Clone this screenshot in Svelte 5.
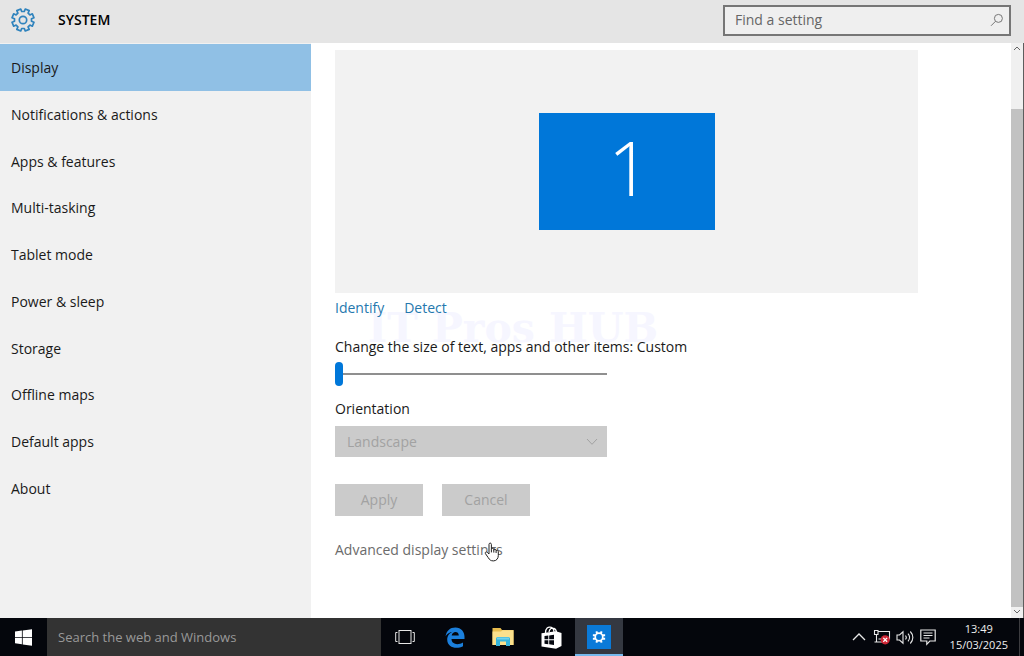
<script>
  const navItems = [
    "Display",
    "Notifications & actions",
    "Apps & features",
    "Multi-tasking",
    "Tablet mode",
    "Power & sleep",
    "Storage",
    "Offline maps",
    "Default apps",
    "About",
  ];

  let active = $state("Display");
  let query = $state("");
  let webQuery = $state("");
  let scale = $state(0);

  // eight flat teeth around the centre of a 24x24 box
  function gearPath(outer, inner) {
    const parts = [];
    for (let i = 0; i < 8; i++) {
      const base = (i * Math.PI) / 4 - Math.PI / 2 + Math.PI / 8;
      [
        [-0.24, inner],
        [-0.19, outer],
        [0.19, outer],
        [0.24, inner],
      ].forEach(([a, r]) => {
        const x = (12 + r * Math.cos(base + a)).toFixed(2);
        const y = (12 + r * Math.sin(base + a)).toFixed(2);
        parts.push(`${x} ${y}`);
      });
    }
    return "M" + parts.join("L") + "Z";
  }

  const gear = gearPath(11.2, 8.6);
</script>

<div class="desktop">
  <header class="title-bar">
    <svg class="gear" viewBox="0 0 24 24" aria-hidden="true">
      <path d={gear} />
      <circle cx="12" cy="12" r="3.7" />
    </svg>
    <h1>SYSTEM</h1>
    <div class="find">
      <input type="text" aria-label="Find a setting" placeholder="Find a setting" bind:value={query} />
      <svg viewBox="0 0 14 14" aria-hidden="true">
        <circle cx="8.4" cy="5.4" r="4" />
        <path d="M5.5 8.3L1 12.8" />
      </svg>
    </div>
  </header>

  <div class="window">
    <nav>
      <ul>
        {#each navItems as item}
          <li>
            <button class:active={item === active} onclick={() => (active = item)}>{item}</button>
          </li>
        {/each}
      </ul>
    </nav>

    <main>
      <div class="preview">
        <button class="monitor">1</button>
      </div>

      <div class="links">
        <a href="#identify">Identify</a>
        <a href="#detect">Detect</a>
        <span class="watermark">IT Pros HUB</span>
      </div>

      <label class="scale-label" for="scale">Change the size of text, apps and other items: Custom</label>
      <input id="scale" type="range" min="0" max="4" bind:value={scale} />

      <label class="orientation-label" for="orientation">Orientation</label>
      <div class="select">
        <select id="orientation" disabled>
          <option>Landscape</option>
        </select>
        <svg viewBox="0 0 12 8" aria-hidden="true"><path d="M1 1L6 6.3L11 1" /></svg>
      </div>

      <div class="actions">
        <button disabled>Apply</button>
        <button disabled>Cancel</button>
      </div>

      <div class="advanced">
        <a href="#advanced">Advanced display settings</a>
        <svg class="pointer" viewBox="0 0 16 20" aria-hidden="true">
          <path
            d="M5 12V2.4C5 .6 7.4 .6 7.4 2.4V7.4C7.5 6 9.7 6 9.8 7.6V8.2C10 6.9 12 7 12.1 8.4V9C12.4 7.9 14.3 8.1 14.3 9.6V13.5C14.3 16.5 12.5 18.9 9.4 18.9C6.6 18.9 5.5 17.7 4.2 15.6L1.4 11.6C.7 10.3 2.3 9.4 3.3 10.4Z"
          />
          <path d="M7.4 7.4V10.4M9.8 8V10.6M12.1 8.8V11" />
        </svg>
      </div>
    </main>

    <div class="scrollbar" aria-hidden="true">
      <svg viewBox="0 0 10 6"><path d="M2 5L5 2L8 5" /></svg>
      <div class="thumb"></div>
      <svg viewBox="0 0 10 6"><path d="M2 1L5 4L8 1" /></svg>
    </div>
  </div>

  <footer class="taskbar">
    <button class="start" aria-label="Start">
      <svg width="17" height="17" viewBox="0 0 17 17">
        <path fill="#fff" d="M0 2.6L6.9 1.6V8H0ZM7.7 1.5L17 .2V8H7.7ZM0 8.8H6.9V15.3L0 14.3ZM7.7 8.8H17V16.7L7.7 15.4Z" />
      </svg>
    </button>
    <input
      class="web-search"
      type="text"
      aria-label="Search the web and Windows"
      placeholder="Search the web and Windows"
      bind:value={webQuery}
    />

    <button class="app task-view" aria-label="Task view">
      <svg width="20" height="16" viewBox="0 0 20 16" fill="none" stroke="#e6e6e6">
        <rect x="4" y="1.5" width="12" height="13" />
        <path d="M2.5 3.5H.7V12.5H2.5M17.5 3.5H19.3V12.5H17.5" />
      </svg>
    </button>
    <button class="app" aria-label="Edge">
      <svg width="20" height="21" viewBox="0 0 20 21">
        <path
          fill="#1b7fdc"
          d="M.6 9.3C1.2 3.8 5 .4 10.4 .4C16.2 .4 19.5 4.7 19.5 9.8V12.1H6.5C6.7 17.8 13.4 18.3 18 15.4V19.2C11.6 22.6 2.2 20.7 2.2 12.5C2.2 8.9 4.4 6 7.8 4.7C4.7 5 2.1 6.7 .6 9.3ZM6.7 8.5H13.8C13.8 3.7 7.2 4 6.7 8.5Z"
        />
      </svg>
    </button>
    <button class="app" aria-label="File Explorer">
      <svg width="22" height="20" viewBox="0 0 22 20">
        <path fill="#e9bd4e" d="M.5 1H8.5L10 3H21.5V18H.5Z" />
        <path fill="#fbe08c" d="M.5 4.5H9L10.5 3.3H21.5V18H.5Z" />
        <path fill="#35b4dc" d="M4 19V12C4 10.6 4.9 10 6 10H16C17.2 10 18 10.6 18 12V19H14V14.5H8V19Z" />
        <path fill="#73d2ea" d="M5 10.5H17V12.5H5Z" />
      </svg>
    </button>
    <button class="app" aria-label="Store">
      <svg width="21" height="23" viewBox="0 0 21 23">
        <path fill="none" stroke="#fff" stroke-width="1.3" d="M4.5 7C4.5 2 7.3 .7 9.5 1.2C12 1.7 12.8 3.5 13 6M8 6C8.5 2.5 11 1.5 13 2.4C15 3.3 15.5 4.5 15.5 7" />
        <path fill="#fff" d="M.5 7.2L15 5.2L20.5 7V20L15 22.8L.5 20.4Z" />
        <path fill="#050810" d="M3.5 10L7.3 9.5V13.3H3.5ZM8.2 9.4L13 8.8V13.3H8.2ZM3.5 14.2H7.3V18.2L3.5 17.7ZM8.2 14.2H13V19L8.2 18.3Z" />
      </svg>
    </button>
    <button class="app running" aria-label="Settings">
      <span class="tile">
        <svg width="14" height="14" viewBox="0 0 24 24" fill="none" stroke="#fff">
          <circle cx="12" cy="12" r="6.5" stroke-width="3" />
          <path stroke-width="3.4" d="M9 6.5L7.5 2.5M15 6.5L16.5 2.5M9 17.5L7.5 21.5M15 17.5L16.5 21.5M6.5 9L1.5 9M17.5 9H22.5M6.5 15H1.5M17.5 15H22.5" />
        </svg>
      </span>
    </button>

    <div class="tray">
      <button aria-label="Show hidden icons">
        <svg width="14" height="8" viewBox="0 0 14 8" fill="none" stroke="#e8e8e8" stroke-width="1.3"><path d="M1 7L7 1L13 7" /></svg>
      </button>
      <button aria-label="Network">
        <svg width="18" height="16" viewBox="0 0 18 16" fill="none" stroke="#e8e8e8" stroke-width="1.1">
          <path d="M5.5 2.5H16.5V10H5.5M3.5 5.5V13M1.5 13H8M6.5 13H10M1.5 1.5H5V5.5H1.5Z" />
          <circle cx="12.2" cy="10.8" r="4.6" fill="#cf2635" stroke="none" />
          <path stroke="#fff" stroke-width="1.3" d="M10.3 8.9L14.1 12.7M14.1 8.9L10.3 12.7" />
        </svg>
      </button>
      <button aria-label="Volume">
        <svg width="18" height="15" viewBox="0 0 18 15" fill="none" stroke="#e8e8e8" stroke-width="1.1">
          <path d="M1 5H3.5L7 1.8V13.2L3.5 10H1ZM9.5 5.5C10.5 6.7 10.5 8.3 9.5 9.5M12 3.7C14 6 14 9 12 11.3M14.3 1.5C17.7 5 17.7 10 14.3 13.5" />
        </svg>
      </button>
      <button aria-label="Action centre">
        <svg width="16" height="17" viewBox="0 0 16 17" fill="none" stroke="#e8e8e8" stroke-width="1.2">
          <path d="M.8 1H15.2V12H9.8L6.8 15.3V12H.8ZM3.5 4H12.5M3.5 6.5H12.5M3.5 9H9.5" />
        </svg>
      </button>
      <div class="clock">
        <span>13:49</span>
        <span>15/03/2025</span>
      </div>
    </div>
  </footer>
</div>

<style>
  :global(body) {
    margin: 0;
    background: #fff;
  }

  .desktop {
    display: flex;
    flex-direction: column;
    min-height: 100vh;
    font-family: "Open Sans", "Noto Sans", sans-serif;
    font-size: 14px;
    line-height: 20px;
    color: #1a1a1a;
  }

  button,
  input,
  select {
    font: inherit;
    color: inherit;
    margin: 0;
    border: 0;
    border-radius: 0;
    box-sizing: border-box;
  }

  button {
    padding: 0;
    background: none;
  }

  a {
    text-decoration: none;
  }

  /* title bar */
  .title-bar {
    display: flex;
    align-items: center;
    box-sizing: border-box;
    height: 43px;
    padding: 0 13px 3px 11px;
    background: #e5e5e5;
  }

  .gear {
    width: 24px;
    height: 24px;
    fill: none;
    stroke: #2f83bd;
    stroke-width: 1.7;
    stroke-linejoin: round;
  }

  h1 {
    margin: 0 0 0 23px;
    font-size: 14px;
    font-weight: 600;
    color: #000;
  }

  .find {
    display: flex;
    align-items: center;
    box-sizing: border-box;
    width: 288px;
    height: 31px;
    margin-left: auto;
    padding-right: 5px;
    border: 2px solid #767676;
    background: #efefef;
  }

  .find input {
    flex: 1;
    min-width: 0;
    padding: 0 10px;
    background: none;
  }

  .find input::placeholder {
    color: #666;
    opacity: 1;
  }

  .find svg {
    width: 14px;
    height: 14px;
    fill: none;
    stroke: #777;
    stroke-width: 1;
  }

  /* settings window */
  .window {
    display: flex;
    flex: 1;
    border-right: 1px solid #5d5d5d;
  }

  nav {
    flex: none;
    width: 311px;
    padding-top: 1px;
    background: #f1f1f1;
  }

  nav ul {
    display: grid;
    grid-auto-rows: 1fr;
    min-height: 467px;
    margin: 0;
    padding: 0;
    list-style: none;
  }

  nav button {
    width: 100%;
    height: 100%;
    padding: 2px 11px 0;
    text-align: left;
  }

  nav button.active {
    background: #90c0e5;
  }

  main {
    flex: 1;
    padding: 7px 24px 0;
  }

  .preview {
    display: flex;
    align-items: center;
    justify-content: center;
    max-width: 583px;
    height: 243px;
    background: #f2f2f2;
  }

  .monitor {
    width: 176px;
    height: 117px;
    padding: 0 0 8px 6px;
    background: #0077d9;
    color: #fff;
    font-family: "Open Sans", sans-serif;
    font-size: 75px;
    font-weight: 300;
    line-height: 109px;
  }

  .links {
    position: relative;
    display: flex;
    gap: 20px;
    margin-top: 5px;
  }

  .links a {
    color: #2578ae;
  }

  .watermark {
    position: absolute;
    z-index: -1;
    top: 10px;
    left: 33px;
    font-family: "DejaVu Serif", serif;
    font-size: 41px;
    font-weight: bold;
    line-height: 40px;
    white-space: nowrap;
    color: #f6f6ff;
  }

  .scale-label,
  .orientation-label {
    display: block;
  }

  .scale-label {
    margin-top: 19px;
  }

  input[type="range"] {
    display: block;
    width: 272px;
    height: 24px;
    margin-top: 5px;
    appearance: none;
    background: none;
  }

  input[type="range"]::-webkit-slider-runnable-track {
    height: 2px;
    background: #8f8f8f;
  }

  input[type="range"]::-webkit-slider-thumb {
    appearance: none;
    width: 8px;
    height: 24px;
    margin-top: -11px;
    border-radius: 4px;
    background: #0077d9;
  }

  .orientation-label {
    margin-top: 13px;
  }

  .select {
    position: relative;
    width: 272px;
    margin-top: 7px;
  }

  .select select {
    display: block;
    width: 100%;
    height: 31px;
    padding: 0 12px;
    appearance: none;
    background: #cbcbcb;
    color: #a2a2a2;
    opacity: 1;
  }

  .select svg {
    position: absolute;
    top: 12px;
    right: 9px;
    width: 12px;
    height: 8px;
    fill: none;
    stroke: #a2a2a2;
  }

  .actions {
    display: flex;
    gap: 19px;
    margin-top: 27px;
  }

  .actions button {
    width: 88px;
    height: 32px;
    background: #cbcbcb;
    color: #a2a2a2;
  }

  .advanced {
    position: relative;
    width: max-content;
    margin-top: 24px;
  }

  .advanced a {
    color: #6b6b6b;
  }

  .pointer {
    position: absolute;
    top: 2px;
    left: 149px;
    width: 16px;
    height: 20px;
    fill: #fff;
    stroke: #222;
    stroke-width: 1;
  }

  .scrollbar {
    display: flex;
    flex-direction: column;
    align-items: center;
    width: 12px;
    padding: 2px 0 3px;
    background: #f0f0f0;
    gap: 2px;
  }

  .scrollbar svg {
    width: 10px;
    height: 6px;
    fill: none;
    stroke: #666;
  }

  .scrollbar .thumb {
    flex: 1;
    width: 100%;
    margin-top: 56px;
    background: #c2c2c2;
  }

  /* taskbar */
  .taskbar {
    display: flex;
    height: 38px;
    background: #04060c;
  }

  .taskbar button {
    display: flex;
    align-items: center;
    justify-content: center;
  }

  .start {
    width: 47px;
  }

  .web-search {
    width: 334px;
    padding: 0 11px;
    background: #333;
    color: #ddd;
    font-size: 13px;
  }

  .web-search::placeholder {
    color: #999;
    opacity: 1;
  }

  .app {
    width: 48px;
  }

  .task-view {
    margin-right: 2px;
  }

  .app.running {
    border-top: 2px solid #343841;
    border-bottom: 2px solid #76b9ed;
    background: #343841;
  }

  .tile {
    display: flex;
    align-items: center;
    justify-content: center;
    width: 24px;
    height: 24px;
    background: #0a7ad8;
  }

  .tray {
    display: flex;
    margin-left: auto;
    margin-right: 4px;
    padding-right: 11px;
    border-right: 1px solid #3c3c40;
  }

  .tray button {
    width: 23px;
  }

  .clock {
    display: flex;
    flex-direction: column;
    justify-content: center;
    margin-left: 10px;
    font-size: 11px;
    line-height: 16px;
    text-align: center;
    color: #eee;
  }
</style>
